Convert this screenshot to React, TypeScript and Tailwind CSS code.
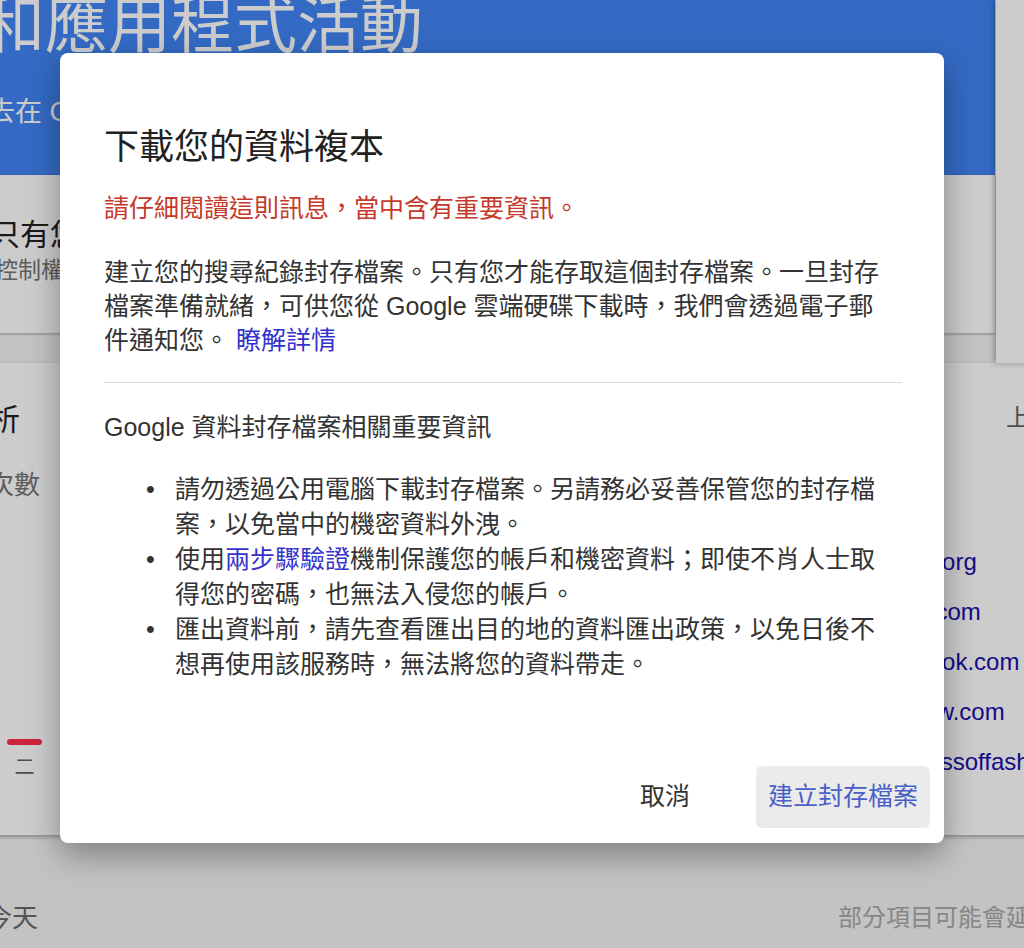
const sites = ['kernel.org', 'apple.com', 'facebook.com', 'wikihow.com', 'businessoffashion.com'];

const days = [
  { label: '二', h: 6 },
  { label: '三', h: 40 },
  { label: '四', h: 120 },
  { label: '五', h: 80 },
  { label: '六', h: 24 },
  { label: '日', h: 60 },
];

export default function App() {
  return (
    <div className="relative h-[948px] w-[1024px] overflow-hidden bg-[#f4f4f4] font-['Liberation_Sans','Noto_Sans_CJK_TC',sans-serif]">
      {/* page behind the dialog, scrolled a little to the right */}
      <div className="-ml-[12px] w-[1060px]">
        <div className="flex items-start gap-px">
          <div className="w-[1007px] shrink-0">
            <header className="h-[175px] overflow-hidden bg-[#4285f4] text-white">
              <h1 className="-ml-[132px] -mt-[11px] whitespace-nowrap text-[63px] leading-[72px]">網路和應用程式活動</h1>
              <p className="-ml-[27px] mt-[35px] whitespace-nowrap text-[27px] leading-[32px]">過去在 Google 網站、應用程式和服務中的活動</p>
            </header>
            <section className="h-[158px] overflow-hidden bg-white shadow-[0_1px_3px_rgba(0,0,0,0.3)]">
              <h2 className="ml-[2px] pt-[40px] whitespace-nowrap text-[30px] leading-[40px] text-[#212121]">只有您能查看這項資料</h2>
              <p className="ml-[7px] whitespace-nowrap text-[23px] leading-[30px] text-[#757575]">控制權在您手上</p>
            </section>
          </div>
          <aside className="h-[363px] flex-1 bg-white shadow-[-2px_0_6px_rgba(0,0,0,0.3)]" />
        </div>

        <section className="flex h-[472px] overflow-hidden bg-white shadow-[0_2px_4px_rgba(0,0,0,0.3)]">
          <div className="flex w-[882px] shrink-0 flex-col">
            <h2 className="-ml-[28px] mt-[37px] whitespace-nowrap text-[30px] leading-[40px] text-[#212121]">分析</h2>
            <p className="-ml-[52px] mt-[30px] whitespace-nowrap text-[26px] leading-[30px] text-[#757575]">造訪次數</p>
            <div className="ml-[19px] mt-[40px] flex h-[241px] gap-[35px]">
              {days.map((d) => (
                <div key={d.label} className="flex w-[35px] flex-col items-center justify-end">
                  <div className="w-full rounded-full bg-[#ff2e4c]" style={{ height: d.h }} />
                  <span className="mt-[8px] text-[20px] leading-[28px] text-[#616161]">{d.label}</span>
                </div>
              ))}
            </div>
          </div>
          <div className="flex-1">
            <p className="ml-[136px] mt-[39px] whitespace-nowrap text-[24px] leading-[32px] text-[#616161]">上次造訪</p>
            <ul className="mt-[103px]">
              {sites.map((s) => (
                <li key={s} className="whitespace-nowrap text-[24px] leading-[50px] text-[#1a0dab]">{s}</li>
              ))}
            </ul>
          </div>
        </section>

        <div className="mt-[65px] flex whitespace-nowrap leading-[36px]">
          <span className="-ml-[2px] w-[852px] shrink-0 text-[26px] text-[#6b6b6b]">今天</span>
          <span className="shrink-0 text-[24px] text-[#a8a8a8]">部分項目可能會延遲顯示</span>
        </div>
      </div>

      <div className="absolute inset-0 bg-black/20" />

      <div
        role="dialog"
        className="absolute left-[60px] top-[53px] flex h-[790px] w-[884px] flex-col rounded-[8px] bg-white pb-[15px] pl-[44px] pr-[14px] shadow-[0_12px_32px_rgba(0,0,0,0.35)]"
      >
        <div className="pr-[28px] pt-[73px] text-[25px] text-[#333333]">
          <h2 className="text-[35px] leading-[42px] text-[#212121]">下載您的資料複本</h2>
          <p className="mt-[23px] leading-[35px] text-[#c5392b]">請仔細閱讀這則訊息，當中含有重要資訊。</p>
          <p className="mt-[29px] max-w-[785px] leading-[34px]">
            建立您的搜尋紀錄封存檔案。只有您才能存取這個封存檔案。一旦封存檔案準備就緒，可供您從 Google 雲端硬碟下載時，我們會透過電子郵件通知您。{' '}
            <a href="#" className="text-[#3333cc]">瞭解詳情</a>
          </p>
          <hr className="mt-[25px] border-[#dddddd]" />
          <h3 className="mt-[27px] leading-[35px]">Google 資料封存檔案相關重要資訊</h3>
          <ul className="mt-[27px] pl-[42px] pr-[17px] leading-[35px]">
            <li className="flex">
              <span className="w-[29px] shrink-0">•</span>
              <span>請勿透過公用電腦下載封存檔案。另請務必妥善保管您的封存檔案，以免當中的機密資料外洩。</span>
            </li>
            <li className="flex">
              <span className="w-[29px] shrink-0">•</span>
              <span>
                使用<a href="#" className="text-[#3333cc]">兩步驟驗證</a>機制保護您的帳戶和機密資料；即使不肖人士取得您的密碼，也無法入侵您的帳戶。
              </span>
            </li>
            <li className="flex">
              <span className="w-[29px] shrink-0">•</span>
              <span>匯出資料前，請先查看匯出目的地的資料匯出政策，以免日後不想再使用該服務時，無法將您的資料帶走。</span>
            </li>
          </ul>
        </div>

        <div className="mt-auto flex items-center justify-end gap-[54px] text-[25px]">
          <button className="h-[62px] rounded-[6px] px-[12px] text-[#333333]">取消</button>
          <button className="h-[62px] rounded-[6px] bg-[#ebebeb] px-[12px] text-[#4a5fc8]">建立封存檔案</button>
        </div>
      </div>
    </div>
  );
}
